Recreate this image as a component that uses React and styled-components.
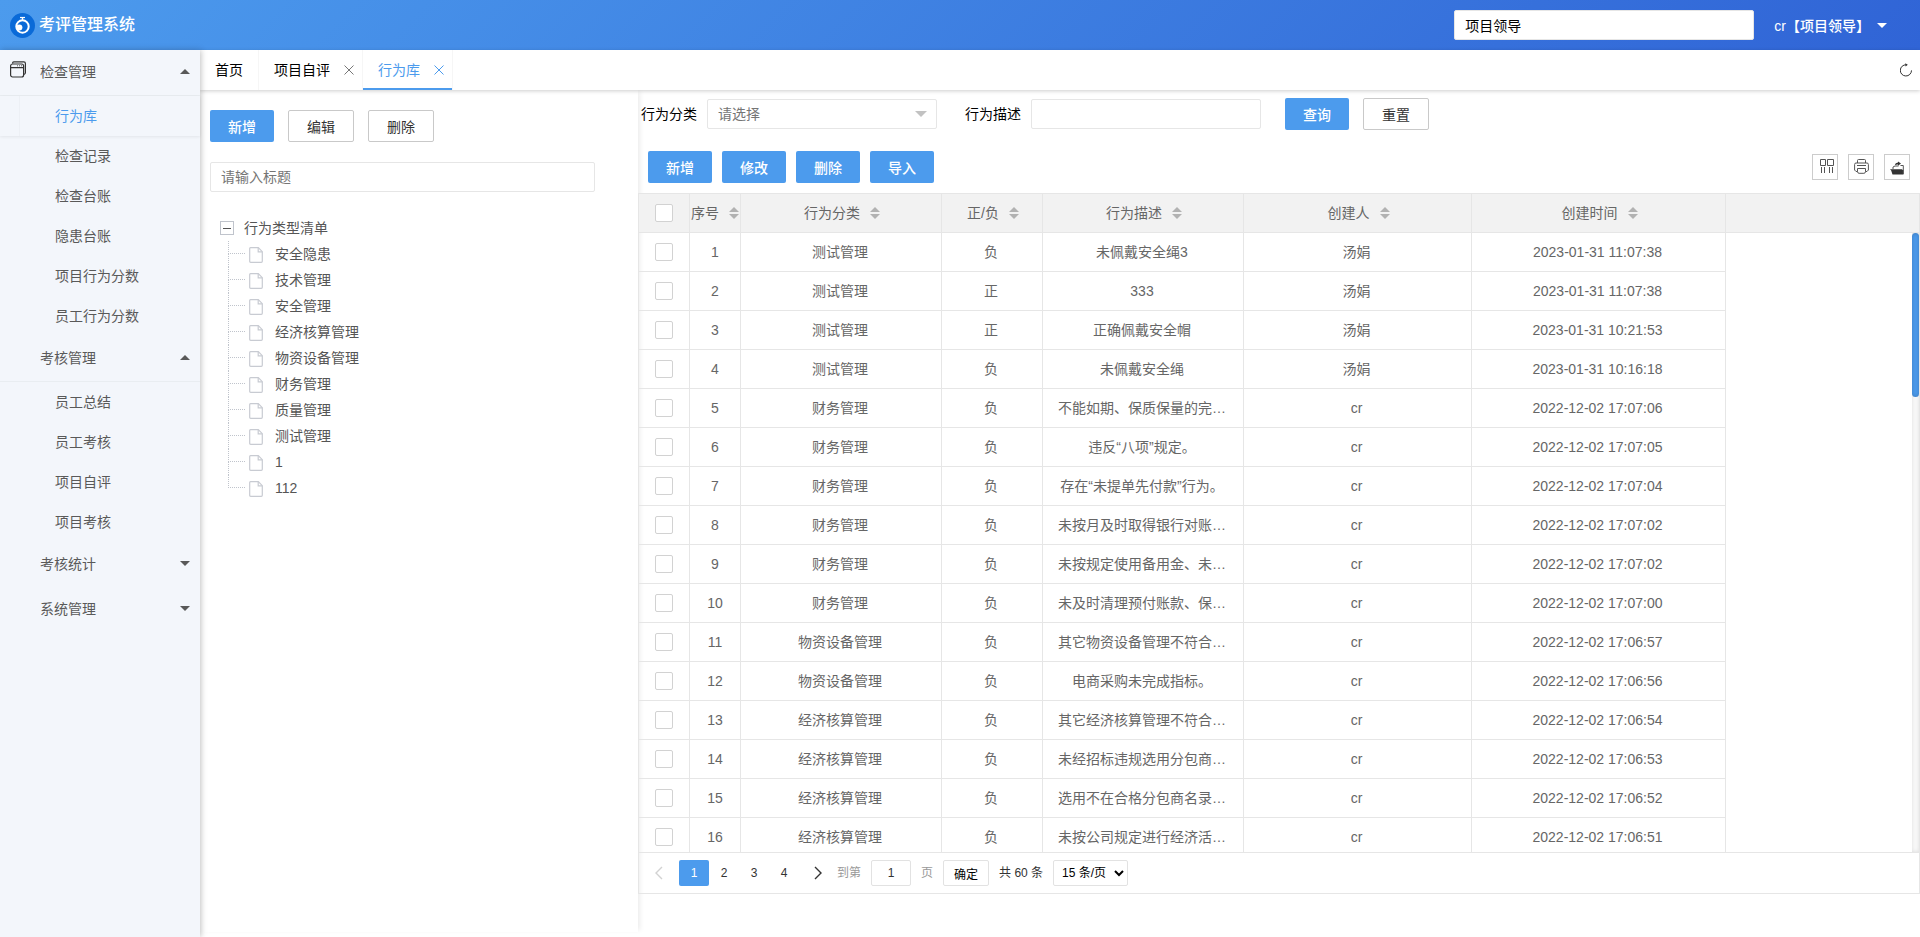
import { useState } from "react";
import styled, { createGlobalStyle, css } from "styled-components";

const GlobalStyle = createGlobalStyle`
    * {
        box-sizing: border-box;
    }

    body {
        margin: 0;
        background-color: #fff;
        color: #000;
        overflow: hidden;
        font-size: 14px;
        line-height: 24px;
        font-family: "Liberation Sans", "Noto Sans CJK SC", sans-serif;
    }

    button, input, select {
        font-family: inherit;
        font-size: inherit;
        outline: none;
    }

    ul {
        list-style: none;
        margin: 0;
        padding: 0;
    }
`

const LayoutStyled = styled.div`
    display: flex;
    flex-direction: column;
    height: 100vh;
`;

const HeaderStyled = styled.header`
    display: flex;
    align-items: center;
    justify-content: space-between;
    height: 50px;
    flex-shrink: 0;
    padding: 0 33px 0 10px;
    color: #fff;
    background: linear-gradient(135deg, #4c9bed 0%, #3064d6 100%);
`;

const BrandStyled = styled.h1`
    display: flex;
    align-items: center;
    gap: 4px;
    margin: 0;
    font-size: 16px;
    line-height: 26px;
    font-weight: 500;
`;

const HeaderRightStyled = styled.div`
    display: flex;
    align-items: center;
    gap: 20px;
`;

const fieldStyle = css`
    height: 30px;
    border: 1px solid #e6e6e6;
    border-radius: 2px;
    background-color: #fff;
    padding: 0 10px;
    color: #000;

    &::placeholder {
        color: #757575;
        opacity: 1;
    }
`;

const InputStyled = styled.input`
    ${fieldStyle}
    width: ${(props) => props.$width || 230}px;
`;

const UserButton = styled.button`
    display: flex;
    align-items: center;
    gap: 7px;
    padding: 0;
    border: none;
    background: none;
    color: #fff;
    font-weight: 500;
`;

const Caret = styled.i`
    width: 0;
    height: 0;
    border: 5px solid transparent;
    border-top-color: currentColor;
    border-bottom-width: 0;

    ${(props) => props.$up && css`
        border-top-width: 0;
        border-bottom: 5px solid currentColor;
    `}
`;

const BodyStyled = styled.div`
    display: flex;
    flex: 1;
    min-height: 0;
`;

const SideBarStyled = styled.nav`
    width: 200px;
    flex-shrink: 0;
    z-index: 2;
    background-color: #f3f6fb;
    color: #595959;
    box-shadow: 1px 0 6px rgba(0, 0, 0, 0.25);
`;

const GroupButton = styled.button`
    display: grid;
    grid-template-columns: 30px 1fr auto;
    align-items: center;
    width: 100%;
    height: 45px;
    padding: 0 10px 3px;
    border: none;
    background: none;
    color: inherit;
    text-align: left;

    svg {
        display: block;
        margin-bottom: 3px;
    }
`;

const SubMenu = styled.ul`
    border-top: 1px solid #e9edf1;
`;

const MenuLink = styled.a`
    display: block;
    height: 40px;
    line-height: 40px;
    padding-left: 55px;
    color: ${(props) => (props.$active ? "#4c9bed" : "inherit")};
    text-decoration: none;
    ${(props) => props.$active && css`
        box-shadow: 0 1px 3px rgba(0, 0, 0, 0.07);
        background: linear-gradient(to right, transparent 19px, #edf0f5 19px, #edf0f5 20px, transparent 20px);
    `}
`;

const MainStyled = styled.main`
    display: flex;
    flex-direction: column;
    flex: 1;
    min-width: 0;
`;

const TabBar = styled.div`
    display: flex;
    justify-content: space-between;
    height: 40px;
    flex-shrink: 0;
    z-index: 1;
    background-color: #fff;
    box-shadow: 0 1px 4px rgba(0, 0, 0, 0.2);
`;

const TabList = styled.div`
    display: flex;
`;

const TabItem = styled.div`
    display: flex;
    align-items: center;
    gap: 14px;
    padding: 0 ${(props) => (props.$closable ? 8 : 15)}px 0 15px;
    border-right: 1px solid #f6f6f6;
    color: ${(props) => (props.$active ? "#4c9bed" : "#000")};
    box-shadow: ${(props) => (props.$active ? "inset 0 -2px 0 #4c9bed" : "none")};
`;

const PlainButton = styled.button`
    display: flex;
    align-items: center;
    padding: 0;
    border: none;
    background: none;
    color: ${(props) => props.$color || "inherit"};
`;

const RefreshButton = styled(PlainButton)`
    padding: 0 8px;
`;

const ContentStyled = styled.div`
    display: flex;
    flex: 1;
    min-height: 0;
`;

const TreePanel = styled.section`
    width: 438px;
    flex-shrink: 0;
    margin-bottom: 5px;
    padding: 20px 10px;
    box-shadow: 4px 0 5px -2px rgba(0, 0, 0, 0.08);
`;

const ButtonRow = styled.div`
    display: flex;
    gap: ${(props) => props.$gap}px;
`;

const ButtonStyled = styled.button`
    height: 32px;
    padding: 0 18px;
    border: none;
    border-radius: 2px;
    background-color: #4c9bed;
    color: #fff;
    font-weight: 500;
    white-space: nowrap;
`;

const PlainBorderButton = styled(ButtonStyled)`
    border: 1px solid #c9c9c9;
    background-color: #fff;
    color: #333;
    font-weight: 400;
`;

const TreeSearch = styled.div`
    padding: 20px 0;
`;

const TreeStyled = styled.div`
    padding: 3px 10px;
    color: #555;
`;

const TreeRoot = styled.div`
    display: flex;
    align-items: center;
    gap: 10px;
    height: 26px;
`;

const TreeToggle = styled.button`
    display: flex;
    align-items: center;
    justify-content: center;
    width: 14px;
    height: 14px;
    padding: 0;
    border: 1px solid #c0c4cc;
    background: none;

    &::before {
        content: "";
        width: 8px;
        height: 1px;
        background-color: #555;
    }
`;

const TreeLeaf = styled.li`
    display: flex;
    align-items: center;
    height: 26px;
    padding-left: 8px;

    svg {
        margin: 2px 12px 0 4px;
    }
`;

// dotted guide line: upper half turns to the right, lower half goes on down
const TreeGuide = styled.span`
    display: flex;
    flex-direction: column;
    width: 17px;
    height: 26px;

    &::before {
        content: "";
        height: 12px;
        border-left: 1px dotted #c0c4cc;
        border-bottom: 1px dotted #c0c4cc;
    }

    &::after {
        content: "";
        height: 14px;
        border-left: 1px dotted ${(props) => (props.$last ? "transparent" : "#c0c4cc")};
    }
`;

const ListPanel = styled.section`
    flex: 1;
    min-width: 0;
`;

const SearchForm = styled.form`
    display: flex;
    align-items: center;
    height: 47px;
    padding-left: 3px;
`;

const FieldStyled = styled.div`
    display: flex;
    align-items: center;
    gap: 10px;
    margin-right: ${(props) => props.$after}px;
`;

const SelectWrap = styled.div`
    display: grid;
    align-items: center;
    width: 230px;

    > * {
        grid-area: 1 / 1;
    }

    > i {
        justify-self: end;
        margin-right: 10px;
        border-width: 6px 6px 0;
        color: #c2c2c2;
        pointer-events: none;
    }
`;

const SelectStyled = styled.select`
    ${fieldStyle}
    width: 100%;
    appearance: none;
    color: #757575;
`;

const ToolBar = styled.div`
    display: flex;
    align-items: center;
    justify-content: space-between;
    padding: 14px 10px 10px;
`;

const ToolButton = styled.button`
    display: flex;
    align-items: center;
    justify-content: center;
    width: 26px;
    height: 26px;
    padding: 0;
    border: 1px solid #ccc;
    background: none;
    color: #333;
`;

const TableBox = styled.div`
    border: 1px solid #e6e6e6;
`;

const TableHead = styled.div`
    border-bottom: 1px solid #e6e6e6;
    background-color: #f2f2f2;
`;

const TableBody = styled.div`
    display: flex;
    height: calc(100vh - 318px);
    overflow: hidden;
`;

const TableScroll = styled.div`
    flex: 1;
    overflow-y: auto;
    scrollbar-width: none;
`;

const ScrollRail = styled.div`
    width: 7px;
    background-color: #fafafa;
    box-shadow: inset 0 0 4px rgba(0, 0, 0, 0.12);

    &::before {
        content: "";
        display: block;
        height: 164px;
        border-radius: 4px;
        background-color: #4c9bed;
        box-shadow: inset 0 0 4px rgba(0, 0, 0, 0.2);
    }
`;

const TableStyled = styled.table`
    table-layout: fixed;
    width: 1087px;
    border-collapse: separate;
    border-spacing: 0;
    color: #666;

    th, td {
        height: 39px;
        padding: 0 16px 0 14px;
        border-right: 1px solid #e6e6e6;
        text-align: center;
        font-weight: 400;
        white-space: nowrap;
        overflow: hidden;
        text-overflow: ellipsis;
    }

    th {
        height: 38px;
        padding: 0 14px 0 16px;
        text-overflow: clip;
    }

    td {
        border-bottom: 1px solid #e6e6e6;
    }

    th:nth-child(-n + 2), td:nth-child(-n + 2) {
        padding: 0;
    }
`;

const CheckBox = styled.input`
    appearance: none;
    display: block;
    width: 18px;
    height: 18px;
    margin: 0 auto;
    border: 1px solid #d2d2d2;
    border-radius: 2px;
    background-color: #fff;

    &:checked {
        border-color: #4c9bed;
        background-color: #4c9bed;
    }
`;

const HeadCell = styled.div`
    display: flex;
    align-items: center;
    justify-content: center;
    gap: 10px;
`;

const SortIcon = styled.span`
    display: flex;
    flex-direction: column;
    gap: 2px;
    color: #b2b2b2;
`;

const PagerStyled = styled.div`
    display: flex;
    align-items: center;
    height: 41px;
    padding: 0 5px;
    border-top: 1px solid #e6e6e6;
    font-size: 12px;
    color: #333;
`;

const PageButton = styled.button`
    display: flex;
    align-items: center;
    justify-content: center;
    width: 30px;
    height: 26px;
    padding: 0;
    border: none;
    border-radius: 2px;
    background-color: ${(props) => (props.$active ? "#4c9bed" : "transparent")};
    color: ${(props) => (props.$active ? "#fff" : "#333")};
`;

const PageArrow = styled(PageButton)`
    margin: ${(props) => (props.$next ? "0 4px" : "0 5px 0 0")};
    color: ${(props) => (props.$next ? "#333" : "#d2d2d2")};
`;

const JumpLabel = styled.label`
    display: flex;
    align-items: center;
    gap: 10px;
    color: #999;
`;

const PageInput = styled.input`
    width: 40px;
    height: 26px;
    padding: 0;
    border: 1px solid #e2e2e2;
    border-radius: 2px;
    text-align: center;
    color: #333;
`;

const ConfirmButton = styled.button`
    height: 26px;
    margin: 0 10px;
    padding: 0 10px;
    border: 1px solid #e2e2e2;
    border-radius: 2px;
    background-color: #fff;
    color: #000;
`;

const LimitSelect = styled.select`
    height: 26px;
    margin-left: 10px;
    padding: 0 4px;
    border: 1px solid #e2e2e2;
    border-radius: 2px;
    background-color: #fff;
    color: #000;
`;

const menu_data = [
    {
        name: "检查管理",
        icon: true,
        children: ["行为库", "检查记录", "检查台账", "隐患台账", "项目行为分数", "员工行为分数"]
    },
    {
        name: "考核管理",
        children: ["员工总结", "员工考核", "项目自评", "项目考核"]
    },
    { name: "考核统计" },
    { name: "系统管理" }
]

const tree_data = ["安全隐患", "技术管理", "安全管理", "经济核算管理", "物资设备管理", "财务管理", "质量管理", "测试管理", "1", "112"]

const columns = [
    { title: "序号", width: 51 },
    { title: "行为分类", width: 201 },
    { title: "正/负", width: 101 },
    { title: "行为描述", width: 201 },
    { title: "创建人", width: 228 },
    { title: "创建时间", width: 254 }
]

const table_data = [
    ["测试管理", "负", "未佩戴安全绳3", "汤娟", "2023-01-31 11:07:38"],
    ["测试管理", "正", "333", "汤娟", "2023-01-31 11:07:38"],
    ["测试管理", "正", "正确佩戴安全帽", "汤娟", "2023-01-31 10:21:53"],
    ["测试管理", "负", "未佩戴安全绳", "汤娟", "2023-01-31 10:16:18"],
    ["财务管理", "负", "不能如期、保质保量的完…", "cr", "2022-12-02 17:07:06"],
    ["财务管理", "负", "违反“八项”规定。", "cr", "2022-12-02 17:07:05"],
    ["财务管理", "负", "存在“未提单先付款”行为。", "cr", "2022-12-02 17:07:04"],
    ["财务管理", "负", "未按月及时取得银行对账…", "cr", "2022-12-02 17:07:02"],
    ["财务管理", "负", "未按规定使用备用金、未…", "cr", "2022-12-02 17:07:02"],
    ["财务管理", "负", "未及时清理预付账款、保…", "cr", "2022-12-02 17:07:00"],
    ["物资设备管理", "负", "其它物资设备管理不符合…", "cr", "2022-12-02 17:06:57"],
    ["物资设备管理", "负", "电商采购未完成指标。", "cr", "2022-12-02 17:06:56"],
    ["经济核算管理", "负", "其它经济核算管理不符合…", "cr", "2022-12-02 17:06:54"],
    ["经济核算管理", "负", "未经招标违规选用分包商…", "cr", "2022-12-02 17:06:53"],
    ["经济核算管理", "负", "选用不在合格分包商名录…", "cr", "2022-12-02 17:06:52"],
    ["经济核算管理", "负", "未按公司规定进行经济活…", "cr", "2022-12-02 17:06:51"]
]

const LogoIcon = () => (
    <svg width="25" height="25" viewBox="0 0 25 25" fill="none">
        <circle cx="12.5" cy="12.5" r="12.5" fill="#0a6ad8" />
        <circle cx="12.5" cy="13.5" r="6.2" stroke="#fff" strokeWidth="2" />
        <path d="M10 4.5h5" stroke="#fff" strokeWidth="1.2" />
        <path d="M12.5 5v3" stroke="#fff" strokeWidth="1.4" />
        <circle cx="9.4" cy="14.4" r="3" fill="#fff" />
    </svg>
)

const WindowIcon = () => (
    <svg width="16" height="17" viewBox="0 0 16 17" fill="none" stroke="#333" strokeWidth="1.2">
        <rect x="0.6" y="3" width="13" height="13" rx="2" />
        <path d="M0.6 6.6h13M2.6 2.6V2q0-1.2 1.2-1.2h10q1.6 0 1.6 1.6v9.4q0 1.2-1.4 1.6" />
        <path d="M7 4.8h1M9 4.8h1M11 4.8h1" strokeWidth="0.8" />
    </svg>
)

const CloseIcon = () => (
    <svg width="10" height="10" viewBox="0 0 10 10" stroke="currentColor" strokeWidth="1">
        <path d="M0.5 0.5l9 9M9.5 0.5l-9 9" />
    </svg>
)

const RefreshIcon = () => (
    <svg width="12" height="14" viewBox="0 0 12 14" fill="none" stroke="#333">
        <path d="M6.3 1.8A5.6 5.6 0 1 0 11.5 7.4" />
        <path d="M5.2 0.2l2.6 1.5-2.2 1.8z" fill="#333" stroke="none" />
    </svg>
)

const FileIcon = () => (
    <svg width="14" height="16" viewBox="0 0 14 16" fill="none" stroke="#c8cbd2">
        <path d="M1.5 0.7h7.8l4 4v9.6q0 1-1 1H1.7q-1 0-1-1V1.7q0-1 0.8-1z" strokeWidth="1.2" />
        <path d="M9.2 0.8v4h4" strokeWidth="1.2" />
    </svg>
)

const ColumnsIcon = () => (
    <svg width="18" height="16" viewBox="-4 0 18 16" fill="none" stroke="#555">
        <path d="M0.5 0.5h5v6h-5zM7.5 0.5h6v6h-6zM1.5 8v6M4.5 8v6M9.5 8v6M12.5 8v6" />
    </svg>
)

const PrintIcon = () => (
    <svg width="16" height="16" viewBox="-1 0 16 16" fill="none" stroke="#555">
        <path d="M3.5 4V1.5q0-1 1-1h6q1 0 1 1V4" />
        <path d="M3.5 12.5H2L0.6 11V5.5Q0.6 4 2 4h11q1.4 0 1.4 1.5V11L13 12.5h-1.5M3 6.5h9" />
        <path d="M3.5 9.5h8v3q0 1.8-1.6 1.8H5.1q-1.6 0-1.6-1.8z" />
    </svg>
)

const ExportIcon = () => (
    <svg width="14" height="16" viewBox="0 -2 14 16">
        <path d="M1 9h12.5v4.5h-11z M0 8.3h12l1 1H1z" fill="#333" />
        <path d="M3 8V6l2-1h3.5M10.5 4.5h2.8V13" fill="none" stroke="#555" />
        <path d="M4.8 4.2Q5.2 1.7 8 1.6V0.4l3 2.2-3 2.1V3.5Q6.2 3.4 4.8 4.2z" fill="#333" />
    </svg>
)

const ArrowIcon = ({ next }) => (
    <svg width="8" height="14" viewBox="0 0 8 14" fill="none" stroke="currentColor" strokeWidth="1.4">
        <path d={next ? "M1 1l6 6-6 6" : "M7 1L1 7l6 6"} />
    </svg>
)

const ColGroup = () => (
    <colgroup>
        <col width={51} />
        {columns.map((col) => <col key={col.title} width={col.width} />)}
    </colgroup>
)

const App = () => {
    const [page, setPage] = useState(1)

    return (
        <LayoutStyled>
            <GlobalStyle />
            <HeaderStyled>
                <BrandStyled><LogoIcon />考评管理系统</BrandStyled>
                <HeaderRightStyled>
                    <InputStyled $width={300} aria-label="角色" defaultValue="项目领导" />
                    <UserButton type="button">cr【项目领导】<Caret /></UserButton>
                </HeaderRightStyled>
            </HeaderStyled>

            <BodyStyled>
                <SideBarStyled>
                    {menu_data.map((group) => (
                        <div key={group.name}>
                            <GroupButton type="button">
                                <span>{group.icon && <WindowIcon />}</span>
                                {group.name}
                                <Caret $up={!!group.children} />
                            </GroupButton>
                            {group.children && (
                                <SubMenu>
                                    {group.children.map((item) => (
                                        <li key={item}>
                                            <MenuLink href="#" $active={item === "行为库"}>{item}</MenuLink>
                                        </li>
                                    ))}
                                </SubMenu>
                            )}
                        </div>
                    ))}
                </SideBarStyled>

                <MainStyled>
                    <TabBar>
                        <TabList>
                            <TabItem>首页</TabItem>
                            <TabItem $closable>
                                项目自评
                                <PlainButton type="button" aria-label="关闭" $color="#777"><CloseIcon /></PlainButton>
                            </TabItem>
                            <TabItem $closable $active>
                                行为库
                                <PlainButton type="button" aria-label="关闭"><CloseIcon /></PlainButton>
                            </TabItem>
                        </TabList>
                        <RefreshButton type="button" aria-label="刷新"><RefreshIcon /></RefreshButton>
                    </TabBar>

                    <ContentStyled>
                        <TreePanel>
                            <ButtonRow $gap={14}>
                                <ButtonStyled type="button">新增</ButtonStyled>
                                <PlainBorderButton type="button">编辑</PlainBorderButton>
                                <PlainBorderButton type="button">删除</PlainBorderButton>
                            </ButtonRow>
                            <TreeSearch>
                                <InputStyled $width={385} aria-label="标题" placeholder="请输入标题" />
                            </TreeSearch>
                            <TreeStyled>
                                <TreeRoot>
                                    <TreeToggle type="button" aria-label="收起" />
                                    行为类型清单
                                </TreeRoot>
                                <ul>
                                    {tree_data.map((item, index) => (
                                        <TreeLeaf key={item}>
                                            <TreeGuide $last={index === tree_data.length - 1} />
                                            <FileIcon />
                                            {item}
                                        </TreeLeaf>
                                    ))}
                                </ul>
                            </TreeStyled>
                        </TreePanel>

                        <ListPanel>
                            <SearchForm>
                                <FieldStyled $after={28}>
                                    <label htmlFor="category">行为分类</label>
                                    <SelectWrap>
                                        <SelectStyled id="category">
                                            <option>请选择</option>
                                        </SelectStyled>
                                        <Caret />
                                    </SelectWrap>
                                </FieldStyled>
                                <FieldStyled $after={24}>
                                    <label htmlFor="describe">行为描述</label>
                                    <InputStyled id="describe" />
                                </FieldStyled>
                                <ButtonRow $gap={14}>
                                    <ButtonStyled type="button">查询</ButtonStyled>
                                    <PlainBorderButton type="reset">重置</PlainBorderButton>
                                </ButtonRow>
                            </SearchForm>

                            <ToolBar>
                                <ButtonRow $gap={10}>
                                    <ButtonStyled type="button">新增</ButtonStyled>
                                    <ButtonStyled type="button">修改</ButtonStyled>
                                    <ButtonStyled type="button">删除</ButtonStyled>
                                    <ButtonStyled type="button">导入</ButtonStyled>
                                </ButtonRow>
                                <ButtonRow $gap={10}>
                                    <ToolButton type="button" aria-label="筛选列"><ColumnsIcon /></ToolButton>
                                    <ToolButton type="button" aria-label="打印"><PrintIcon /></ToolButton>
                                    <ToolButton type="button" aria-label="导出"><ExportIcon /></ToolButton>
                                </ButtonRow>
                            </ToolBar>

                            <TableBox>
                                <TableHead>
                                    <TableStyled>
                                        <ColGroup />
                                        <thead>
                                            <tr>
                                                <th><CheckBox type="checkbox" aria-label="全选" /></th>
                                                {columns.map((col) => (
                                                    <th key={col.title}>
                                                        <HeadCell>
                                                            {col.title}
                                                            <SortIcon><Caret $up /><Caret /></SortIcon>
                                                        </HeadCell>
                                                    </th>
                                                ))}
                                            </tr>
                                        </thead>
                                    </TableStyled>
                                </TableHead>
                                <TableBody>
                                    <TableScroll>
                                        <TableStyled>
                                            <ColGroup />
                                            <tbody>
                                                {table_data.map((row, index) => (
                                                    <tr key={index}>
                                                        <td><CheckBox type="checkbox" aria-label={`选择第${index + 1}行`} /></td>
                                                        <td>{index + 1}</td>
                                                        {row.map((cell, i) => <td key={i}>{cell}</td>)}
                                                    </tr>
                                                ))}
                                            </tbody>
                                        </TableStyled>
                                    </TableScroll>
                                    <ScrollRail />
                                </TableBody>
                                <PagerStyled>
                                    <PageArrow type="button" aria-label="上一页"><ArrowIcon /></PageArrow>
                                    {[1, 2, 3, 4].map((num) => (
                                        <PageButton key={num} type="button" $active={num === page} onClick={() => setPage(num)}>{num}</PageButton>
                                    ))}
                                    <PageArrow $next type="button" aria-label="下一页"><ArrowIcon next /></PageArrow>
                                    <JumpLabel>到第<PageInput defaultValue="1" />页</JumpLabel>
                                    <ConfirmButton type="button">确定</ConfirmButton>
                                    <span>共 60 条</span>
                                    <LimitSelect aria-label="每页条数">
                                        <option>15 条/页</option>
                                    </LimitSelect>
                                </PagerStyled>
                            </TableBox>
                        </ListPanel>
                    </ContentStyled>
                </MainStyled>
            </BodyStyled>
        </LayoutStyled>
    )
}

export default App
